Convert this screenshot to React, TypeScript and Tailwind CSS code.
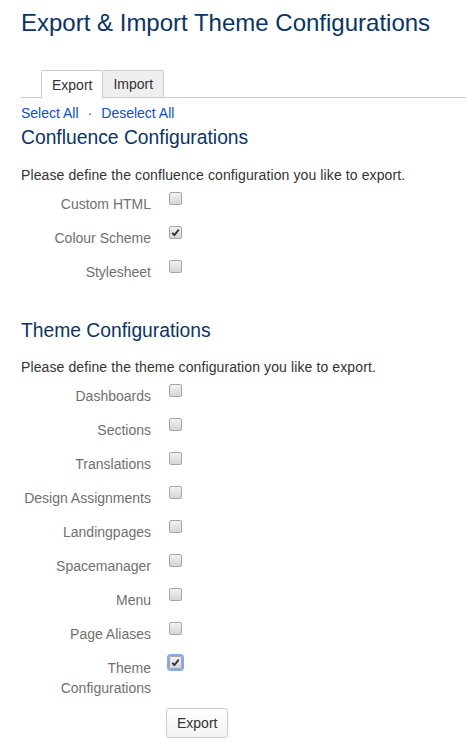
import { useState } from "react";

const confluenceItems = [
  { id: "customHtml", label: "Custom HTML", checked: false },
  { id: "colourScheme", label: "Colour Scheme", checked: true },
  { id: "stylesheet", label: "Stylesheet", checked: false },
];

const themeItems = [
  { id: "dashboards", label: "Dashboards", checked: false },
  { id: "sections", label: "Sections", checked: false },
  { id: "translations", label: "Translations", checked: false },
  { id: "designAssignments", label: "Design Assignments", checked: false },
  { id: "landingpages", label: "Landingpages", checked: false },
  { id: "spacemanager", label: "Spacemanager", checked: false },
  { id: "menu", label: "Menu", checked: false },
  { id: "pageAliases", label: "Page Aliases", checked: false },
  { id: "themeConfigurations", label: "Theme Configurations", checked: true, focused: true },
];

function Checkbox({ checked, focused, onChange }: { checked: boolean; focused?: boolean; onChange: () => void }) {
  return (
    <button
      type="button"
      onClick={onChange}
      className={`relative flex h-[13px] w-[13px] items-center justify-center rounded-[2px] border border-[#a6a6a6] bg-gradient-to-b from-[#f1f1f1] to-[#d6d6d6] ${
        focused ? "outline outline-2 outline-[#7eaaf7]" : ""
      }`}
    >
      {checked && (
        <svg width="9" height="9" viewBox="0 0 9 9">
          <path d="M1.2 4.8 L3.4 7 L7.8 1.6" fill="none" stroke="#333" strokeWidth="1.9" />
        </svg>
      )}
    </button>
  );
}

function OptionRow({
  label,
  checked,
  focused,
  onToggle,
}: {
  label: string;
  checked: boolean;
  focused?: boolean;
  onToggle: () => void;
}) {
  return (
    <div className="flex items-start">
      <div className="w-[130px] pt-[5px] text-right text-[14px] leading-[20px] text-[#707070]">
        {label === "Theme Configurations" ? (
          <>
            Theme
            <br />
            Configurations
          </>
        ) : (
          label
        )}
      </div>
      <div className="ml-[18px] mt-[3px]">
        <Checkbox checked={checked} focused={focused} onChange={onToggle} />
      </div>
    </div>
  );
}

export default function App() {
  const [tab, setTab] = useState<"export" | "import">("export");
  const [conf, setConf] = useState(confluenceItems);
  const [theme, setTheme] = useState(themeItems);

  const setAll = (v: boolean) => {
    setConf((c) => c.map((i) => ({ ...i, checked: v })));
    setTheme((t) => t.map((i) => ({ ...i, checked: v })));
  };

  return (
    <div className="min-h-[746px] w-[466px] bg-white pl-[21px] font-['Liberation_Sans',Arial,sans-serif] text-[14px] text-[#333]">
      <h1 className="pt-[8px] text-[24px] leading-[30px] text-[#0b3466]">
        Export &amp; Import Theme Configurations
      </h1>

      {/* Tabs */}
      <div className="mt-[32px] flex h-[28px] border-b border-[#cccccc] pl-[20px]">
        <button
          onClick={() => setTab("export")}
          className={`-mb-px h-[29px] rounded-t-[2px] border border-b-0 border-[#cccccc] px-[10px] text-[14px] ${
            tab === "export" ? "bg-white text-[#333]" : "bg-[#eeeeee] text-[#333]"
          }`}
        >
          Export
        </button>
        <button
          onClick={() => setTab("import")}
          className={`h-[28px] rounded-t-[2px] border border-l-0 border-[#cccccc] px-[10px] text-[14px] ${
            tab === "import" ? "bg-white text-[#333]" : "bg-[#eeeeee] text-[#333]"
          }`}
        >
          Import
        </button>
      </div>

      <div className="mt-[6px] flex items-center text-[14px] leading-[18px] text-[#0b4fc4]">
        <a href="#" onClick={(e) => { e.preventDefault(); setAll(true); }}>Select All</a>
        <span className="mx-[9px] text-[#555]">·</span>
        <a href="#" onClick={(e) => { e.preventDefault(); setAll(false); }}>Deselect All</a>
      </div>

      <h2 className="mt-[3px] text-[19.3px] leading-[26px] text-[#0b3466]">Confluence Configurations</h2>
      <p className="mt-[15px] leading-[18px] tracking-[0.11px]">
        Please define the confluence configuration you like to export.
      </p>

      <div className="mt-[5px] flex flex-col gap-[4px]">
        {conf.map((item) => (
          <div key={item.id} className="h-[30px]">
            <OptionRow
              label={item.label}
              checked={item.checked}
              onToggle={() =>
                setConf((c) => c.map((i) => (i.id === item.id ? { ...i, checked: !i.checked } : i)))
              }
            />
          </div>
        ))}
      </div>

      <h2 className="mt-[31px] text-[19.3px] leading-[26px] text-[#0b3466]">Theme Configurations</h2>
      <p className="mt-[14px] leading-[18px] tracking-[0.11px]">
        Please define the theme configuration you like to export.
      </p>

      <div className="mt-[5px] flex flex-col gap-[4px]">
        {theme.map((item) => (
          <div key={item.id} className="min-h-[30px]">
            <OptionRow
              label={item.label}
              checked={item.checked}
              focused={item.focused}
              onToggle={() =>
                setTheme((t) => t.map((i) => (i.id === item.id ? { ...i, checked: !i.checked } : i)))
              }
            />
          </div>
        ))}
      </div>

      <div className="ml-[145px] mt-[10px]">
        <button className="h-[30px] rounded-[3px] border border-[#cccccc] bg-gradient-to-b from-white to-[#f2f2f2] px-[10px] text-[14px] text-[#333]">
          Export
        </button>
      </div>
    </div>
  );
}
